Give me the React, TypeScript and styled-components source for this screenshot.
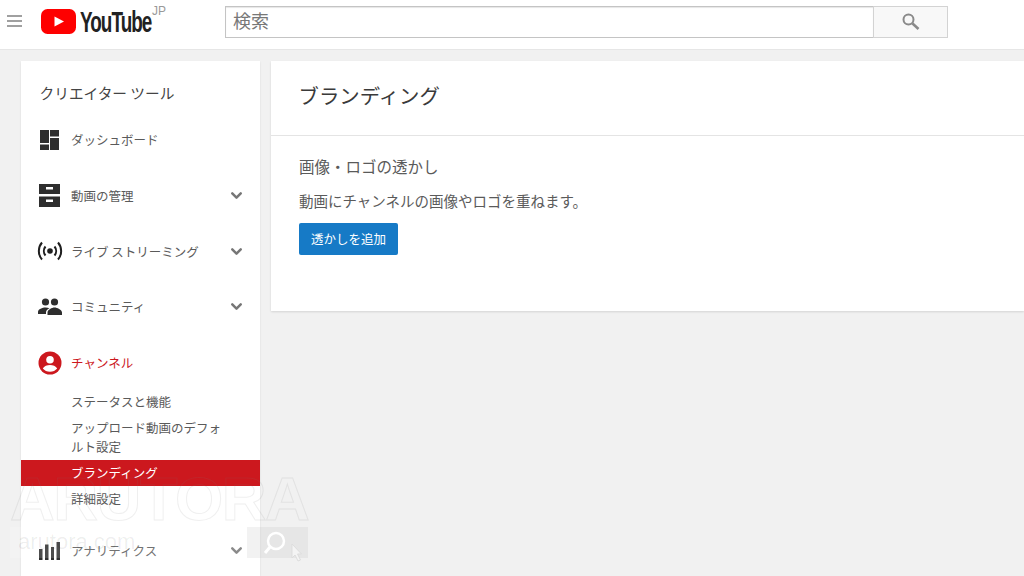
import React from "react";
import styled, { createGlobalStyle } from "styled-components";
import { ChevronDown } from "lucide-react";

const GlobalStyle = createGlobalStyle`
	html, body {
		margin: 0;
		padding: 0;
		height: 576px;
		overflow: hidden;
		background-color: #f1f1f1;
		font-family: "Noto Sans CJK JP", "Noto Sans", sans-serif;
	}
	* {
		box-sizing: border-box;
	}
`;

const DashboardIcon = () => (
	<svg width="19" height="20" viewBox="0 0 19 20" fill="#2e2e2e">
		<path d="M0 0h9v13H0zM10 0h9v6.500h-9zM10 8h9v12h-9zM0 14.500h9V20H0z" />
	</svg>
);

const ManagerIcon = () => (
	<svg width="21" height="23" viewBox="0 0 21 23" fill="#2e2e2e">
		<path
			fillRule="evenodd"
			d="M0 0h21v10H0zM7 3v2.500h7V3zM0 12.500h21V23H0zM7 15.500V18h7v-2.500z"
		/>
	</svg>
);

const LiveIcon = () => (
	<svg width="26" height="22" viewBox="0 0 26 22" fill="none" stroke="#1f1f1f" strokeWidth="2">
		<circle cx="13" cy="11" r="2.800" fill="#1f1f1f" stroke="none" />
		<path d="M8.500 6.500a7 7 0 0 0 0 9M17.500 6.500a7 7 0 0 1 0 9" />
		<path d="M5 2.500a13 13 0 0 0 0 17M21 2.500a13 13 0 0 1 0 17" />
	</svg>
);

const PeopleIcon = () => (
	<svg width="24" height="17" viewBox="0 0 24 17" fill="#2e2e2e">
		<circle cx="7.500" cy="4" r="3.600" />
		<circle cx="16.500" cy="4" r="3.600" />
		<path d="M0 14c0-2.800 4.500-4.500 7.500-4.500 1.300 0 2.800.3 4 .8-2 1-3.500 2.200-3.500 3.900V16H0zM9.500 17v-2.500c0-2.800 4.500-5 7-5s7.500 2.200 7.500 5V17z" />
	</svg>
);

const ChannelIcon = () => (
	<svg width="24" height="24" viewBox="0 0 24 24">
		<circle cx="12" cy="12" r="11.500" fill="#cc181e" />
		<circle cx="12" cy="8.800" r="3.800" fill="#fff" />
		<path d="M4.800 17.500c1.200-2.500 4.500-3.600 7.200-3.600s6 1.100 7.200 3.600c-1.700 2-4.300 3.300-7.200 3.300s-5.500-1.300-7.200-3.300z" fill="#fff" />
	</svg>
);

const AnalyticsIcon = () => (
	<svg width="21" height="18" viewBox="0 0 21 18" fill="#2e2e2e">
		<path d="M0 7h3.500v11H0zM6 2.500h3.500V18H6zM12 5h3v13h-3zM17.500 0H21v18h-3.500z" />
	</svg>
);

const navTop = [
	{ label: "ダッシュボード", icon: <DashboardIcon /> },
	{ label: "動画の管理", icon: <ManagerIcon />, arrow: true },
	{ label: "ライブ ストリーミング", icon: <LiveIcon />, arrow: true },
	{ label: "コミュニティ", icon: <PeopleIcon />, arrow: true },
];

const subItems = [
	{ label: "ステータスと機能" },
	{ label: "アップロード動画のデフォルト設定" },
	{ label: "ブランディング", active: true },
	{ label: "詳細設定" },
];

const App: React.FC = () => {
	return (
		<>
			<GlobalStyle />
			<Header>
				<Burger>
					<span />
					<span />
					<span />
				</Burger>
				<Logo>
					<svg width="35" height="25" viewBox="0 0 35 25">
						<rect width="35" height="25" rx="6.500" fill="#fe0000" />
						<path d="M13.500 7.500l9.500 5-9.500 5z" fill="#fff" />
					</svg>
					<LogoText>YouTube</LogoText>
					<LogoRegion>JP</LogoRegion>
				</Logo>
				<Search>
					<SearchInput>検索</SearchInput>
					<SearchButton>
						<svg width="20" height="20" viewBox="0 0 20 20" fill="none" stroke="#8a8a8a">
							<circle cx="7.500" cy="7.500" r="5" strokeWidth="2" />
							<path d="M11.500 11.500l6 5.500" strokeWidth="2.600" />
						</svg>
					</SearchButton>
				</Search>
			</Header>
			<Content>
				<Sidebar>
					<SidebarTitle>クリエイター ツール</SidebarTitle>
					{navTop.map((item) => (
						<NavRow key={item.label}>
							<NavIcon>{item.icon}</NavIcon>
							<NavLabel>{item.label}</NavLabel>
							{item.arrow && <ChevronDown size={17} strokeWidth={3.5} color="#767676" />}
						</NavRow>
					))}
					<NavRow>
						<NavIcon>
							<ChannelIcon />
						</NavIcon>
						<NavLabel $red>チャンネル</NavLabel>
					</NavRow>
					<SubList>
						{subItems.map((item) => (
							<SubItem key={item.label} $active={item.active}>
								{item.label}
							</SubItem>
						))}
					</SubList>
					<NavRow>
						<NavIcon>
							<AnalyticsIcon />
						</NavIcon>
						<NavLabel>アナリティクス</NavLabel>
						<ChevronDown size={17} strokeWidth={3.5} color="#767676" />
					</NavRow>
				</Sidebar>
				<Panel>
					<PanelHead>ブランディング</PanelHead>
					<PanelBody>
						<SectionTitle>画像・ロゴの透かし</SectionTitle>
						<SectionText>動画にチャンネルの画像やロゴを重ねます。</SectionText>
						<AddButton>透かしを追加</AddButton>
					</PanelBody>
				</Panel>
			</Content>
			<Watermark>
				<WatermarkTitle>ARUTORA</WatermarkTitle>
				<WatermarkBar>
					<WatermarkUrl>arutora.com</WatermarkUrl>
					<WatermarkSearch>
						<svg width="60" height="38" viewBox="0 0 60 38" fill="none" stroke="#ffffff">
							<circle cx="29" cy="14" r="8" strokeWidth="2.500" />
							<path d="M23 20l-5 6" strokeWidth="3" />
							<path d="M45 17v14l3-3 3 6 2.500-1-3-6h4z" fill="#f4f4f4" stroke="#dddddd" strokeWidth="1" />
						</svg>
					</WatermarkSearch>
				</WatermarkBar>
			</Watermark>
		</>
	);
};

export default App;

const Header = styled.header`
	height: 50px;
	display: flex;
	align-items: flex-start;
	background-color: #fff;
	border-bottom: 1px solid #e6e6e6;
	padding-left: 7px;
`;

const Burger = styled.div`
	width: 15px;
	display: flex;
	flex-direction: column;
	gap: 3px;
	margin: 15px 19px 0 0;

	span {
		display: block;
		height: 2px;
		background-color: #a0a0a0;
	}
`;

const Logo = styled.div`
	width: 184px;
	height: 25px;
	margin-top: 9px;
	display: flex;
	align-items: center;
	position: relative;
`;

const LogoText = styled.span`
	font-family: "Liberation Sans", sans-serif;
	font-weight: 700;
	font-size: 30px;
	line-height: 25px;
	letter-spacing: -1.500px;
	color: #222;
	margin-left: 4px;
	transform: scaleX(0.63);
	transform-origin: left center;
`;

const LogoRegion = styled.span`
	position: absolute;
	left: 111px;
	top: -5px;
	font-family: "Liberation Sans", sans-serif;
	font-size: 12px;
	color: #999;
`;

const Search = styled.div`
	width: 723px;
	height: 32px;
	margin-top: 6px;
	display: flex;
`;

const SearchInput = styled.div`
	flex: 1;
	border: 1px solid #c4c4c4;
	border-right: none;
	box-shadow: inset 0 1px 1px #e6e6e6;
	padding-left: 7px;
	font-size: 18px;
	line-height: 27px;
	color: #777;
`;

const SearchButton = styled.div`
	width: 75px;
	display: flex;
	justify-content: center;
	align-items: center;
	background-color: #f8f8f8;
	border: 1px solid #d3d3d3;
`;

const Content = styled.main`
	display: flex;
	align-items: flex-start;
	gap: 11px;
	padding: 11px 0 0 21px;
`;

const Sidebar = styled.nav`
	width: 239px;
	height: 515px;
	overflow: hidden;
	flex-shrink: 0;
	background-color: #fff;
	box-shadow: 0 1px 2px rgba(0, 0, 0, 0.1);
`;

const SidebarTitle = styled.div`
	padding: 20px 0 0 18.500px;
	height: 51px;
	font-size: 14.700px;
	line-height: 24px;
	color: #444;
`;

const NavRow = styled.div`
	height: 55.700px;
	display: flex;
	align-items: center;
	padding: 0 15px 0 15px;
`;

const NavIcon = styled.div`
	width: 27px;
	height: 26px;
	margin-right: 8px;
	display: flex;
	justify-content: center;
	align-items: center;
`;

const NavLabel = styled.span<{ $red?: boolean }>`
	flex: 1;
	font-size: 12.500px;
	color: ${(props) => (props.$red ? "#cc181e" : "#5a5a5a")};
`;

const SubList = styled.div`
	margin-top: -1.500px;
	margin-bottom: 11px;
`;

const SubItem = styled.div<{ $active?: boolean }>`
	padding: 3.500px 30px 3.500px 50px;
	font-size: 12.500px;
	line-height: 19px;
	color: ${(props) => (props.$active ? "#fff" : "#5a5a5a")};
	background-color: ${(props) => (props.$active ? "#cc181e" : "transparent")};
`;

const Panel = styled.section`
	flex: 1;
	height: 250px;
	background-color: #fff;
	box-shadow: 0 1px 2px rgba(0, 0, 0, 0.12);
`;

const PanelHead = styled.h1`
	margin: 0;
	height: 75px;
	padding: 19px 0 0 27.500px;
	font-size: 20.400px;
	line-height: 30px;
	font-weight: 400;
	color: #3a3a3a;
	border-bottom: 1px solid #e4e4e4;
`;

const PanelBody = styled.div`
	padding: 19px 28px;
`;

const SectionTitle = styled.h2`
	margin: 0;
	font-size: 15.500px;
	line-height: 22px;
	font-weight: 400;
	color: #5a5a5a;
`;

const SectionText = styled.p`
	margin: 13px 0 0;
	font-size: 14.500px;
	line-height: 22px;
	color: #5a5a5a;
`;

const AddButton = styled.button`
	display: block;
	margin-top: 11px;
	width: 99px;
	height: 32px;
	padding: 0 0 2px;
	border: none;
	border-radius: 2px;
	background-color: #167ac6;
	color: #fff;
	font-family: inherit;
	font-size: 12.500px;
`;

const Watermark = styled.div`
	position: absolute;
	left: 10px;
	top: 471px;
	width: 298px;
	pointer-events: none;
`;

const WatermarkTitle = styled.div`
	font-family: "Liberation Sans", sans-serif;
	font-weight: 700;
	font-size: 62px;
	line-height: 56px;
	letter-spacing: -1.500px;
	color: transparent;
	-webkit-text-stroke: 1px rgba(120, 120, 120, 0.12);
	white-space: nowrap;
`;

const WatermarkBar = styled.div`
	height: 31px;
	display: flex;
	background-color: rgba(255, 255, 255, 0.15);
`;

const WatermarkUrl = styled.div`
	flex: 1;
	padding-left: 8px;
	font-family: "Liberation Sans", sans-serif;
	font-size: 22px;
	line-height: 30px;
	color: rgba(0, 0, 0, 0.07);
`;

const WatermarkSearch = styled.div`
	width: 61px;
	height: 31px;
	background-color: rgba(0, 0, 0, 0.05);
`;
